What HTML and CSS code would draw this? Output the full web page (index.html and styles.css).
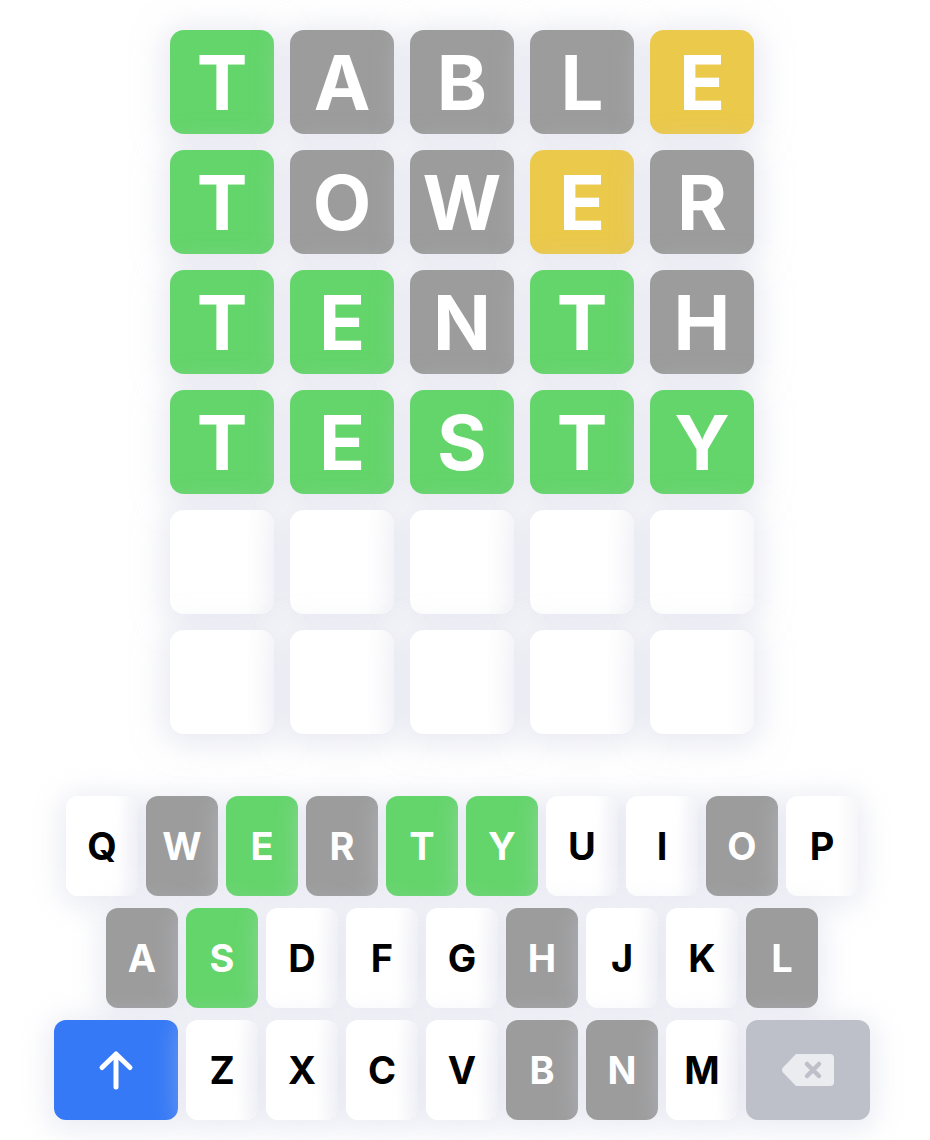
FILE: index.html
```html
<!DOCTYPE html>
<html>
<head>
<meta charset="utf-8">
<link rel="stylesheet" href="styles.css">
</head>
<body>
<div class="app">
  <div class="board">
    <div class="row"><div class="tile g">T</div><div class="tile x">A</div><div class="tile x">B</div><div class="tile x">L</div><div class="tile y">E</div></div>
    <div class="row"><div class="tile g">T</div><div class="tile x">O</div><div class="tile x">W</div><div class="tile y">E</div><div class="tile x">R</div></div>
    <div class="row"><div class="tile g">T</div><div class="tile g">E</div><div class="tile x">N</div><div class="tile g">T</div><div class="tile x">H</div></div>
    <div class="row"><div class="tile g">T</div><div class="tile g">E</div><div class="tile g">S</div><div class="tile g">T</div><div class="tile g">Y</div></div>
    <div class="row"><div class="tile"></div><div class="tile"></div><div class="tile"></div><div class="tile"></div><div class="tile"></div></div>
    <div class="row"><div class="tile"></div><div class="tile"></div><div class="tile"></div><div class="tile"></div><div class="tile"></div></div>
  </div>
  <div class="keyboard">
    <div class="krow">
      <div class="key">Q</div><div class="key x">W</div><div class="key g">E</div><div class="key x">R</div><div class="key g">T</div><div class="key g">Y</div><div class="key">U</div><div class="key">I</div><div class="key x">O</div><div class="key">P</div>
    </div>
    <div class="krow">
      <div class="key x">A</div><div class="key g">S</div><div class="key">D</div><div class="key">F</div><div class="key">G</div><div class="key x">H</div><div class="key">J</div><div class="key">K</div><div class="key x">L</div>
    </div>
    <div class="krow">
      <div class="key wide enter"><svg width="40" height="40" viewBox="0 0 40 40"><path d="M20 37V4M6 17.5L20 4l14 13.5" fill="none" stroke="#fff" stroke-width="5" stroke-linecap="round" stroke-linejoin="round"/></svg></div>
      <div class="key">Z</div><div class="key">X</div><div class="key">C</div><div class="key">V</div><div class="key x">B</div><div class="key x">N</div><div class="key">M</div>
      <div class="key wide back"><svg width="54" height="34" viewBox="0 0 54 34"><path d="M15 1H49a4 4 0 0 1 4 4V29a4 4 0 0 1-4 4H15L2 19.5a4 4 0 0 1 0-5Z" fill="#ebecef"/><path d="M26 11l12 12M38 11L26 23" stroke="#bdc0c8" stroke-width="4.5" stroke-linecap="round"/></svg></div>
    </div>
  </div>
</div>
</body>
</html>
```

FILE: styles.css
```css
html, body {
  margin: 0;
  padding: 0;
  background: #ffffff;
}
body {
  font-family: Inter, "Noto Sans", "Liberation Sans", sans-serif;
  width: 930px;
  height: 1140px;
  overflow: hidden;
}
.app {
  width: 924px;
  display: flex;
  flex-direction: column;
  align-items: center;
  padding-top: 30px;
}
.board {
  display: flex;
  flex-direction: column;
  gap: 16px;
}
.row {
  display: flex;
  gap: 16px;
}
.tile {
  width: 104px;
  height: 104px;
  border-radius: 14px;
  background: linear-gradient(to right, #ffffff 75%, #f8f8fb 100%);
  box-shadow: 0 4px 30px 6px rgba(210, 212, 230, 0.5);
  display: flex;
  align-items: center;
  justify-content: center;
  color: #fff;
  font-size: 76px;
  font-weight: 700;
  line-height: 1;
}
.tile.g { background: #63d56a; }
.tile.x { background: #9c9c9c; }
.tile.y { background: #ebc94b; }
.keyboard {
  margin-top: 62px;
  display: flex;
  flex-direction: column;
  align-items: center;
  gap: 12px;
}
.krow {
  display: flex;
  gap: 8px;
}
.key {
  width: 72px;
  height: 100px;
  border-radius: 12px;
  background: linear-gradient(to right, #ffffff 70%, #f6f6fa 100%);
  box-shadow: 0 4px 28px 6px rgba(210, 212, 230, 0.45);
  display: flex;
  align-items: center;
  justify-content: center;
  color: #000;
  font-size: 38px;
  font-weight: 700;
  line-height: 1;
}
.key.g { background: #63d56a; color: #fff; }
.key.x { background: #9c9c9c; color: #fff; }
.key.wide { width: 124px; }
.key.enter { background: #3579f6; }
.key.back { background: #bdc0c8; }
```
